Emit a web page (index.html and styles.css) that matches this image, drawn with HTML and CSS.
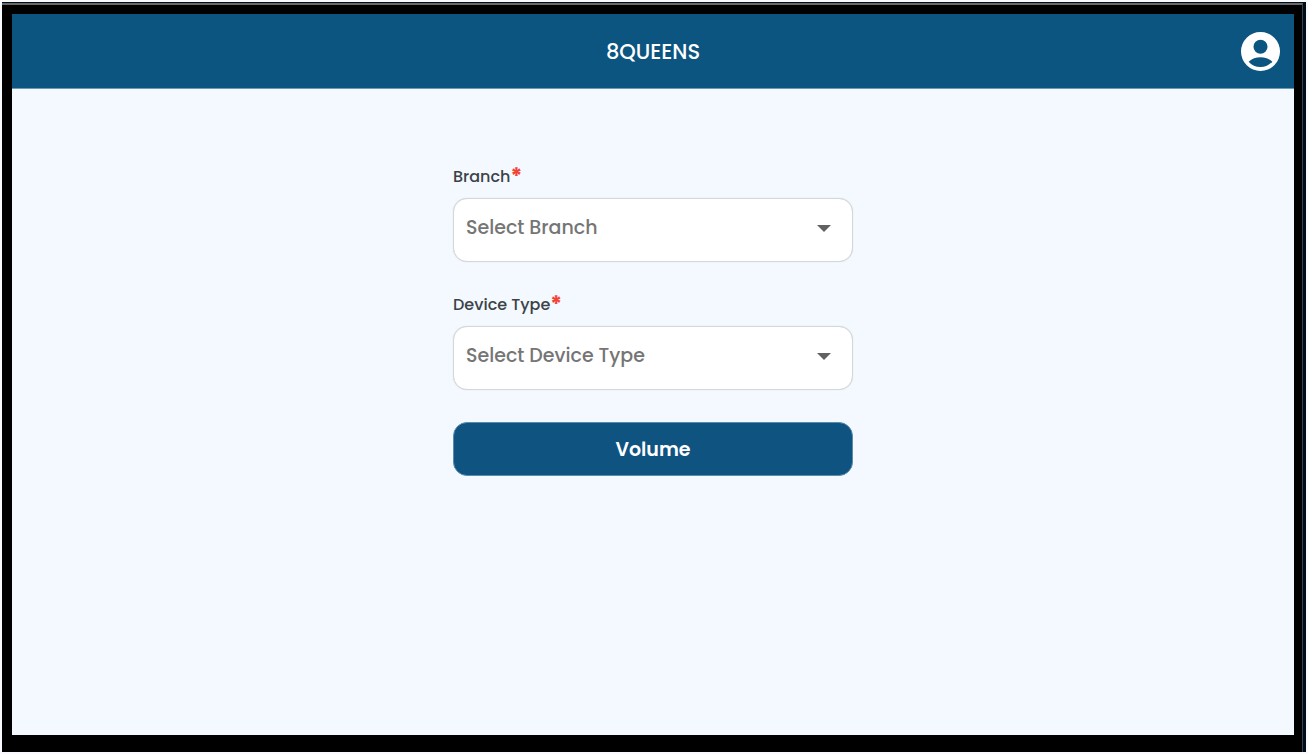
FILE: index.html
```html
<!DOCTYPE html>
<html lang="en">
<head>
    <meta charset="UTF-8">
    <meta name="viewport" content="width=device-width, initial-scale=1.0">
    <title>8QUEENS</title>
    <link rel="stylesheet" href="styles.css">
</head>
<body>
    <div class="device">
        <div class="bezel">
            <div class="app">
                <header class="topbar">
                    <h1>8QUEENS</h1>
                    <button type="button" class="account-btn" aria-label="Account">
                        <svg viewBox="2 2 20 20" fill="currentColor" aria-hidden="true">
                            <path fill-rule="evenodd" d="M12 2a10 10 0 1 0 0 20 10 10 0 0 0 0-20zM12 6a3.6 3.6 0 1 1 0 7.2 3.6 3.6 0 0 1 0-7.2zM12 20c-2.4 0-4.6-1.1-6.1-2.8C7.6 15.8 9.7 15 12 15s4.4.8 6.1 2.2C16.6 18.9 14.4 20 12 20z"/>
                        </svg>
                    </button>
                </header>

                <main>
                    <form class="control-form">
                        <div class="form-group">
                            <label for="branch">Branch<span class="required">*</span></label>
                            <div class="select-wrap">
                                <select id="branch" required>
                                    <option value="">Select Branch</option>
                                </select>
                                <svg class="arrow" viewBox="0 0 14 7" aria-hidden="true"><path d="M0 0h14L7 7z"/></svg>
                            </div>
                        </div>

                        <div class="form-group">
                            <label for="deviceType">Device Type<span class="required">*</span></label>
                            <div class="select-wrap">
                                <select id="deviceType" required>
                                    <option value="">Select Device Type</option>
                                </select>
                                <svg class="arrow" viewBox="0 0 14 7" aria-hidden="true"><path d="M0 0h14L7 7z"/></svg>
                            </div>
                        </div>

                        <button type="submit" class="submit-btn">Volume</button>
                    </form>
                </main>
            </div>
        </div>
    </div>
</body>
</html>
```

FILE: styles.css
```css
* { box-sizing: border-box; }
body {
    font-family: Poppins, Inter, sans-serif;
    font-weight: 500;
    background: #f8fafd;
    margin: 0;
    padding: 2px;
    min-height: 100vh;
    display: flex;
}
.device {
    flex: 1;
    display: flex;
    background: #020c17;
    padding: 1px 3px 0 0;
}
.bezel {
    flex: 1;
    display: flex;
    background: #000;
    border-top: 2px solid #66686a;
    border-right: 1px solid #36414b;
    padding: 9px 8px 17px 10px;
}
.app {
    flex: 1;
    display: flex;
    flex-direction: column;
    background: #f3f9fe;
}
.topbar {
    display: grid;
    grid-template-columns: 1fr auto 1fr;
    align-items: center;
    height: 75px;
    padding: 0 14px;
    background: #0b5580;
    border-bottom: 1px solid #6b9ab5;
    color: #fff;
}
h1 {
    grid-column: 2;
    margin: 0;
    font-size: 21px;
    font-weight: 500;
}
.account-btn {
    justify-self: end;
    width: 39px;
    height: 39px;
    padding: 0;
    background: none;
    border: none;
    color: #fff;
    cursor: pointer;
}
.account-btn svg { display: block; }
main { padding: 76px 16px 16px; }
.control-form {
    width: 100%;
    max-width: 400px;
    margin: 0 auto;
}
.form-group { margin-bottom: 31px; }
label {
    display: block;
    height: 24px;
    margin-bottom: 9px;
    color: #3c4248;
    font-size: 16px;
    line-height: 24px;
}
.required {
    color: #f44336;
    font-size: 22px;
    font-weight: 700;
    line-height: 20px;
    vertical-align: -2px;
}
.select-wrap {
    position: relative;
}
select {
    display: block;
    width: 100%;
    height: 64px;
    padding: 0 48px 5px 12px;
    appearance: none;
    background: #fff;
    border: 1px solid #d3d6da;
    border-radius: 14px;
    box-shadow: 0 0 1px #d3d6da;
    color: #757575;
    font: inherit;
    font-size: 19px;
}
.arrow {
    position: absolute;
    top: 27px;
    right: 22px;
    width: 14px;
    height: 7px;
    fill: #616161;
    pointer-events: none;
}
.submit-btn {
    display: block;
    width: 100%;
    height: 54px;
    margin-top: 32px;
    background: #0f5381;
    color: #fff;
    border: 1px solid #5c8cab;
    border-radius: 14px;
    font: inherit;
    font-size: 19px;
    font-weight: 600;
    cursor: pointer;
}
.submit-btn:hover { background: #0c466d; }
```
